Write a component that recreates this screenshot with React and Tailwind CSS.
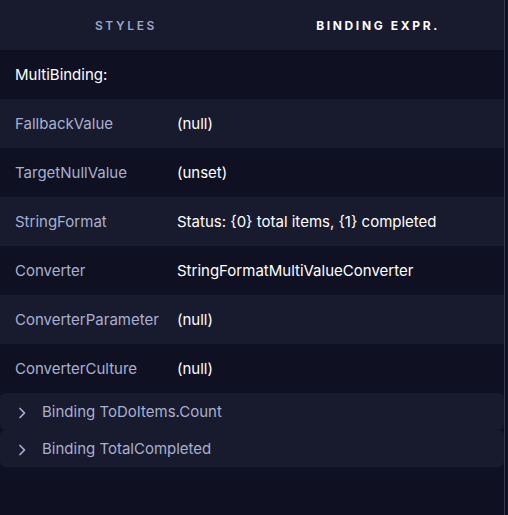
import React from "react";

const rows = [
  ["FallbackValue", "(null)"],
  ["TargetNullValue", "(unset)"],
  ["StringFormat", "Status: {0} total items, {1} completed"],
  ["Converter", "StringFormatMultiValueConverter"],
  ["ConverterParameter", "(null)"],
  ["ConverterCulture", "(null)"],
];

function Chevron() {
  return (
    <svg width="10" height="14" viewBox="0 0 10 14" fill="none" className="shrink-0">
      <path d="M3 2.5 L7.5 7 L3 11.5" stroke="#a9b0cf" strokeWidth="1.7" strokeLinecap="round" strokeLinejoin="round" />
    </svg>
  );
}

export default function App() {
  return (
    <div
      className="flex w-[508px] h-[515px] bg-[#0f1123] overflow-hidden"
      style={{ fontFamily: "Inter, 'Noto Sans', sans-serif" }}
    >
      <div className="flex flex-col w-[505px] border-r border-[#34374f]">
        <div className="flex h-[50px] pt-[1px] bg-[#181a2e] items-center">
          <div className="flex-1 text-center text-[12px] font-semibold tracking-[0.22em] text-[#9ea6cc]">STYLES</div>
          <div className="flex-1 text-center text-[12px] font-bold tracking-[0.22em] text-white">BINDING EXPR.</div>
        </div>
        <div className="flex items-center h-[49px] pt-[2px] px-[15px] text-[15px] text-white bg-[#0f1123]">MultiBinding:</div>
        {rows.map(([k, v], i) => (
          <div
            key={k}
            className={`flex items-center h-[49px] pt-[2px] text-[15px] ${i % 2 === 0 ? "bg-[#181a2e]" : "bg-[#0f1123]"}`}
          >
            <div className="w-[177px] pl-[15px] text-[#a9b0cf]">{k}</div>
            <div className="text-white">{v}</div>
          </div>
        ))}
        <div className="flex flex-col">
          {["Binding ToDoItems.Count", "Binding TotalCompleted"].map((t) => (
            <div key={t} className="flex items-center gap-[15px] h-[37px] pt-[2px] pl-[17px] rounded-[6px] bg-[#181a2e] text-[15px] text-[#a9b0cf]">
              <Chevron />
              <span>{t}</span>
            </div>
          ))}
        </div>
      </div>
      <div className="flex-1 bg-[#0f1123]" />
    </div>
  );
}
